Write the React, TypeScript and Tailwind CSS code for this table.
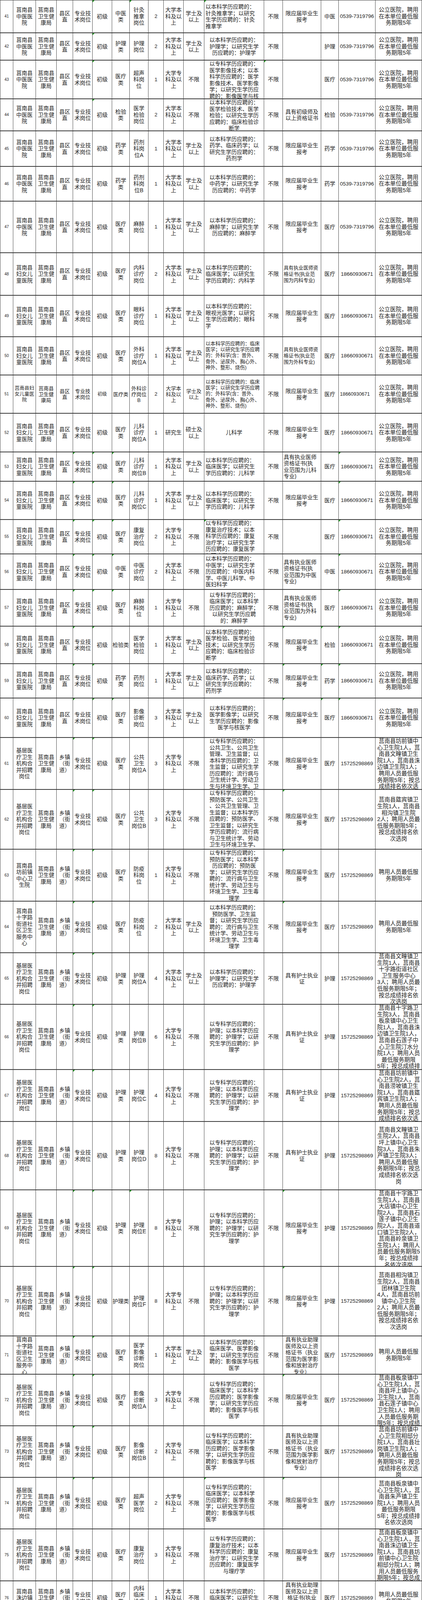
import React from "react";

type Row = {
  n: number;
  h: number;
  u: string;
  c6: string;
  c7: string;
  c8: string;
  c9: string;
  c10: string;
  m: string;
  ml?: boolean;
  ms?: boolean;
  o: string;
  ol?: boolean;
  os?: boolean;
  e: string;
  r: string;
  g: number[];
  sm?: boolean;
};

const ZY = "莒南县\n中医医\n院";
const FY = "莒南县\n妇女儿\n童医院";
const JC = "基层医\n疗卫生\n机构合\n并招聘\n岗位";
const BK = "大学本\n科及以\n上";
const ZK = "大学专\n科及以\n上";
const XS = "学士及\n以上";
const BX = "不限";
const GL = "公立医院，聘用\n在本单位最低服\n务期限5年";
const PY = "聘用人员最低服\n务期限5年";
const YJ = "限应届毕业生\n报考";
const HS = "具有护士执业\n证";
const HL4 = "以专科学历应聘的：\n护理；以本科学历应\n聘的：护理学；以研\n究生学历应聘的：护\n理学";
const LC = "以专科学历应聘的：\n临床医学；以本科学\n历应聘的：临床医\n学；以研究生学历应\n聘的：内科学、外科\n学";
const YX = "以专科学历应聘的：\n临床医学；以本科学\n历应聘的：医学影像\n学；以研究生学历应\n聘的：影像医学与核\n医学";
const WK = "以本科学历应聘的：临床\n医学；以研究生学历应聘\n的：外科学(含：普外、\n骨外、泌尿外、胸心外、\n神外、整形、烧伤)";
const EK = "以本科学历应聘的：\n临床医学；以研究生\n学历应聘的：儿科学";
const ZL = "具有执业助理\n医师及以上资\n格证书（执业\n范围为医学影\n像和放射治疗\n专业）";
const SQ = "莒南县\n十字路\n街道社\n区卫生\n服务中\n心";
const KF = "以专科学历应聘的：\n康复治疗技术；以本\n科学历应聘的：康复\n治疗学；以研究生学\n历应聘的：康复医学\n与理疗学";

const rows: Row[] = [
  { n: 41, h: 84, u: ZY, c6: "中医\n类", c7: "针灸\n推拿\n岗位", c8: "2", c9: BK, c10: XS, m: "以本科学历应聘的：\n针灸推拿学；以研究\n生学历应聘的：针灸\n推拿学", ml: true, o: YJ, e: "中医", r: GL, g: [5, 7, 11] },
  { n: 42, h: 70, u: ZY, c6: "护理\n类", c7: "护理\n岗位", c8: "2", c9: BK, c10: XS, m: "以本科学历应聘的：\n护理学；以研究生学\n历应聘的：护理学", o: "", e: "护理", r: GL, g: [5] },
  { n: 43, h: 99, u: ZY, c6: "医疗\n类", c7: "超声\n科岗\n位", c8: "1", c9: ZK, c10: BX, m: "以专科学历应聘的：\n医学影像技术；以本\n科学历应聘的：医学\n影像技术、医学影像\n学；以研究生学历应\n聘的：影像医学与核\n医学", o: "", e: "医疗", r: GL, g: [5, 12] },
  { n: 44, h: 82, u: ZY, c6: "检验\n类", c7: "医学\n检验\n岗位", c8: "2", c9: BK, c10: BX, m: "以本科学历应聘的：\n医学检验技术、医学\n检验；以研究生学历\n应聘的：临床检验诊\n断学", o: "具有初级师及\n以上资格证书", e: "检验", r: GL, g: [5] },
  { n: 45, h: 91, u: ZY, c6: "药学\n类", c7: "药剂\n科岗\n位A", c8: "1", c9: BK, c10: XS, m: "以本科学历应聘的：\n药学、临床药学；以\n研究生学历应聘的：\n药剂学", o: YJ, e: "药学", r: GL, g: [] },
  { n: 46, h: 89, u: ZY, c6: "药学\n类", c7: "药剂\n科岗\n位B", c8: "1", c9: BK, c10: XS, m: "以本科学历应聘的：\n中药学；以研究生学\n历应聘的：中药学", o: YJ, e: "药学", r: GL, g: [] },
  { n: 47, h: 132, u: ZY, c6: "医疗\n类", c7: "麻醉\n岗位", c8: "1", c9: BK, c10: XS, m: "以本科学历应聘的：\n麻醉学；以研究生学\n历应聘的：麻醉学", o: YJ, e: "医疗", r: GL, g: [] },
  { n: 48, h: 109, u: FY, c6: "医疗\n类", c7: "内科\n诊疗\n岗位", c8: "2", c9: BK, c10: XS, m: "以本科学历应聘的：\n临床医学；以研究生\n学历应聘的：内科学", ml: true, o: "具有执业医师资\n格证书(执业范\n围为内科专业)", ol: true, os: true, e: "医疗", r: GL, g: [] },
  { n: 49, h: 106, u: FY, c6: "医疗\n类", c7: "眼科\n诊疗\n岗位", c8: "1", c9: BK, c10: XS, m: "以本科学历应聘的：\n眼视光医学；以研究\n生学历应聘的：眼科\n学", ml: true, o: YJ, e: "医疗", r: GL, g: [] },
  { n: 50, h: 98, u: FY, c6: "医疗\n类", c7: "外科\n诊疗\n岗位A", c8: "1", c9: BK, c10: XS, m: WK, ml: true, ms: true, o: "具有执业医师资\n格证书(执业范\n围为外科专业)", ol: true, os: true, e: "医疗", r: GL, g: [] },
  { n: 51, h: 98, u: "莒南县妇\n女儿童医\n院", c6: "医疗类", c7: "外科诊\n疗岗位\nB", c8: "2", c9: BK, c10: XS, m: WK, ml: true, ms: true, o: YJ, e: "医疗", r: GL, g: [], sm: true },
  { n: 52, h: 99, u: FY, c6: "医疗\n类", c7: "儿科\n诊疗\n岗位A", c8: "1", c9: "研究生", c10: "硕士及\n以上", m: "儿科学", o: YJ, e: "医疗", r: GL, g: [] },
  { n: 53, h: 75, u: FY, c6: "医疗\n类", c7: "儿科\n诊疗\n岗位B", c8: "1", c9: BK, c10: XS, m: EK, ml: true, o: "具有执业医师\n资格证书(执\n业范围为儿科\n专业)", ol: true, e: "医疗", r: GL, g: [4, 5, 6, 15] },
  { n: 54, h: 98, u: FY, c6: "医疗\n类", c7: "儿科\n诊疗\n岗位C", c8: "1", c9: BK, c10: XS, m: EK, ml: true, o: YJ, e: "医疗", r: GL, g: [4, 5, 6, 15] },
  { n: 55, h: 88, u: FY, c6: "医疗\n类", c7: "康复\n治疗\n岗位", c8: "2", c9: ZK, c10: BX, m: KF, ml: true, o: "", e: "医疗", r: GL, g: [4, 5, 6, 11, 15] },
  { n: 56, h: 91, u: FY, c6: "中医\n类", c7: "中医\n诊疗\n岗位", c8: "2", c9: BK, c10: BX, m: "以本科学历应聘的：\n中医学；以研究生学\n历应聘的：中医内科\n学、中医儿科学、中\n医妇科学", ml: true, o: "具有执业医师\n资格证书(执\n业范围为中医\n专业)", ol: true, e: "中医", r: GL, g: [4, 5, 6, 15] },
  { n: 57, h: 94, u: FY, c6: "医疗\n类", c7: "麻醉\n科岗\n位", c8: "1", c9: ZK, c10: BX, m: "以专科学历应聘的：\n临床医学；以本科学\n历应聘的：麻醉学；\n以研究生学历应聘\n的：麻醉学", o: "具有执业医师\n资格证书(执\n业范围为外科\n专业)", ol: true, e: "医疗", r: GL, g: [4, 5, 6, 15] },
  { n: 58, h: 96, u: FY, c6: "检验类", c7: "医学\n检验\n岗位", c8: "1", c9: BK, c10: XS, m: "以本科学历应聘的：\n医学检验、医学检验\n技术；以研究生学历\n应聘的：临床检验诊\n断学", ml: true, o: YJ, e: "检验", r: GL, g: [4, 5, 13, 14, 15] },
  { n: 59, h: 88, u: FY, c6: "药学\n类", c7: "药剂\n岗位", c8: "1", c9: BK, c10: XS, m: "以本科学历应聘的：\n临床药学、药学；以\n研究生学历应聘的：\n药剂学", ml: true, o: YJ, e: "药学", r: GL, g: [4, 5, 13, 14, 15] },
  { n: 60, h: 101, u: FY, c6: "医疗\n类", c7: "影像\n诊断\n岗位", c8: "3", c9: BK, c10: XS, m: "以本科学历应聘的：\n医学影像学；以研究\n生学历应聘的：影像\n医学与核医学", o: YJ, e: "医疗", r: GL, g: [4, 5, 6, 13, 14, 15] },
  { n: 61, h: 133, u: JC, c6: "医疗\n类", c7: "公共\n卫生\n岗位A", c8: "3", c9: ZK, c10: BX, m: "以专科学历应聘的：\n公共卫生、公共卫生\n管理、卫生监督；以\n本科学历应聘的：卫\n生监督；以研究生学\n历应聘的：流行病与\n卫生统计学、劳动卫\n生与环境卫生学、卫\n生毒理学", o: YJ, e: "医疗", r: "莒南县坊前镇中\n心卫生院1人，莒\n南县文疃镇卫生\n院1人，莒南县洙\n边镇卫生院1人；\n聘用人员最低服\n务期限5年；按总\n成绩排名依次选\n岗", g: [4, 5] },
  { n: 62, h: 153, u: JC, c6: "医疗\n类", c7: "公共\n卫生\n岗位B", c8: "3", c9: ZK, c10: BX, m: "以专科学历应聘的：\n预防医学、公共卫生\n、公共卫生管理、卫\n生监督；以本科学历\n应聘的：预防医学、\n卫生监督；以研究生\n学历应聘的：流行病\n与卫生统计学、劳动\n卫生与环境卫生学、\n卫生毒理学", o: YJ, e: "医疗", r: "莒南县筵宾镇卫\n生院1人，莒南县\n相沟镇卫生院\n2人；聘用人员最\n低服务期限5年；\n按总成绩排名依\n次选岗", g: [4, 5, 13] },
  { n: 63, h: 133, u: "莒南县\n坊前镇\n中心卫\n生院", c6: "医疗\n类", c7: "防疫\n科岗\n位", c8: "1", c9: ZK, c10: BX, m: "以专科学历应聘的：\n预防医学；以本科学\n历应聘的：预防医\n学；以研究生学历应\n聘的：流行病与卫生\n统计学、劳动卫生与\n环境卫生学、卫生毒\n理学", o: YJ, e: "医疗", r: PY, g: [4, 5, 13] },
  { n: 64, h: 132, u: SQ, c6: "医疗\n类", c7: "防疫\n科岗\n位", c8: "2", c9: BK, c10: XS, m: "以本科学历应聘的：\n预防医学、卫生监\n督；以研究生学历应\n聘的：流行病与卫生\n统计学、劳动卫生与\n环境卫生学、卫生毒\n理学", o: YJ, e: "医疗", r: PY, g: [4, 5, 13] },
  { n: 65, h: 132, u: JC, c6: "护理\n类", c7: "护理\n岗位A", c8: "4", c9: BK, c10: XS, m: "以本科学历应聘的：\n护理学；以研究生学\n历应聘的：护理学", o: HS, e: "护理", r: "莒南县文疃镇卫\n生院1人，莒南县\n十字路街道社区\n卫生服务中心\n3人；聘用人员最\n低服务期限5年；\n按总成绩排名依\n次选岗", g: [4, 5] },
  { n: 66, h: 167, u: JC, c6: "护理\n类", c7: "护理\n岗位B", c8: "6", c9: ZK, c10: BX, m: HL4, o: HS, e: "护理", r: "莒南县十字路卫\n生院3人，莒南县\n板泉镇中心卫生\n院1人，莒南县洙\n边镇卫生院1人，\n莒南县石莲子中\n心卫生院汀水分\n院1人；聘用人员\n最低服务期限\n5年；按总成绩排\n名依次选岗", g: [4, 5] },
  { n: 67, h: 133, u: JC, c6: "护理\n类", c7: "护理\n岗位C", c8: "4", c9: ZK, c10: BX, m: HL4, o: HS, e: "护理", r: "莒南县坊前镇中\n心卫生院2人，莒\n南县涝坡镇卫生\n院1人，莒南县筵\n宾镇卫生院1人；\n聘用人员最低服\n务期限5年；按总\n成绩排名依次选\n岗", g: [4, 5] },
  { n: 68, h: 175, u: JC, c6: "护理\n类", c7: "护理\n岗位D", c8: "8", c9: ZK, c10: BX, m: HL4, o: HS, e: "护理", r: "莒南县文疃镇卫\n生院2人，莒南县\n坪上镇中心卫生\n院3人，莒南县朱\n芦镇卫生院3人；\n聘用人员最低服\n务期限5年；按总\n成绩排名依次选\n岗", g: [] },
  { n: 69, h: 196, u: JC, c6: "护理\n类", c7: "护理\n岗位E", c8: "8", c9: ZK, c10: BX, m: HL4, o: YJ, e: "护理", r: "莒南县十字路卫\n生院1人，莒南县\n大店镇中心卫生\n院2人，莒南县石\n莲子镇中心卫生\n院2人，莒南县道\n口镇卫生院2人，\n莒南县岭泉镇卫\n生院1人；聘用人\n员最低服务期限5\n年；按总成绩排\n名依次选岗", g: [4, 5, 7, 13] },
  { n: 70, h: 178, u: JC, c6: "护理类", c7: "护理\n岗位F", c8: "8", c9: ZK, c10: BX, m: HL4, o: YJ, e: "护理", r: "莒南县相沟镇卫\n生院2人，莒南县\n团林镇卫生院\n4人，莒南县坊前\n镇中心卫生院\n2人；聘用人员最\n低服务期限5年；\n按总成绩排名依\n次选岗", g: [4, 5, 13] },
  { n: 71, h: 98, u: SQ, c6: "医疗\n类", c7: "医学\n影像\n诊断\n岗位", c8: "1", c9: BK, c10: XS, m: "以本科学历应聘的：\n临床医学、医学影像\n学；以研究生学历应\n聘的：影像医学与核\n医学", o: ZL, e: "医疗", r: PY, g: [4, 5] },
  { n: 72, h: 132, u: JC, c6: "医疗\n类", c7: "影像\n诊断\n岗位A", c8: "3", c9: ZK, c10: BX, m: YX, o: YJ, e: "医疗", r: "莒南县板泉镇中\n心卫生院1人，莒\n南县坪上镇中心\n卫生院1人，莒南\n县石莲子镇中心\n卫生院1人；聘用\n人员最低服务期\n限5年；按总成绩\n排名依次选岗", g: [4, 5, 13] },
  { n: 73, h: 132, u: JC, c6: "医疗\n类", c7: "影像\n诊断\n岗位B", c8: "2", c9: ZK, c10: BX, m: YX, ml: true, o: ZL, e: "医疗", r: "莒南县坊前镇中\n心卫生院相邸分\n院1人，莒南县壮\n岗镇卫生院1人；\n聘用人员最低服\n务期限5年；按总\n成绩排名依次选\n岗", g: [4, 5] },
  { n: 74, h: 132, u: JC, c6: "医疗\n类", c7: "超声\n医学\n岗位", c8: "2", c9: ZK, c10: BX, m: YX, ml: true, o: YJ, e: "医疗", r: "莒南县板泉镇中\n心卫生院1人，莒\n南县朱芦镇卫生\n院1人；聘用人员\n最低服务期限\n5年；按总成绩排\n名依次选岗", g: [4, 5, 11, 13] },
  { n: 75, h: 133, u: JC, c6: "医疗\n类", c7: "康复\n治疗\n岗位", c8: "3", c9: ZK, c10: BX, m: KF, o: YJ, e: "医疗", r: "莒南县板泉镇中\n心卫生院1人，莒\n南县洙边镇卫生\n院1人，莒南县坊\n前镇中心卫生院\n相邸分院1人；聘\n用人员最低服务\n期限5年；按总成\n绩排名依次选岗", g: [] },
  { n: 76, h: 87, u: "莒南县\n洙边镇\n卫生院", c6: "医疗\n类", c7: "内科\n临床\n诊疗\n岗位", c8: "1", c9: BK, c10: BX, m: "以本科学历应聘的：\n临床医学；以研究生\n学历应聘的：内科学", o: "具有执业助理\n医师及以上资\n格证书(执业\n范围为内科专\n业)", e: "医疗", r: PY, g: [] },
  { n: 77, h: 98, u: "莒南县\n团林镇\n卫生院", c6: "医疗\n类", c7: "临床\n诊疗\n岗位", c8: "4", c9: ZK, c10: BX, m: LC, o: YJ, e: "医疗", r: PY, g: [] },
  { n: 78, h: 99, u: "莒南县\n石莲子\n镇中心\n卫生院", c6: "医疗\n类", c7: "临床\n诊疗\n岗位", c8: "2", c9: ZK, c10: BX, m: LC, o: "具有执业助理\n医师及以上资\n格证书", e: "医疗", r: PY, g: [4, 5] },
  { n: 79, h: 147, u: JC, c6: "医疗\n类", c7: "临床\n诊疗\n岗位A", c8: "7", c9: ZK, c10: BX, m: LC, o: YJ, e: "医疗", r: "莒南县石莲子镇\n中心卫生院汀水\n分院1人，莒南县\n道口镇卫生院\n3人，莒南县岭泉\n镇卫生院3人；聘\n用人员最低服务\n期限5年；按总成\n绩排名依次选岗", g: [4, 5, 13] },
  { n: 80, h: 132, u: JC, c6: "医疗\n类", c7: "临床\n诊疗\n岗位B", c8: "7", c9: ZK, c10: BX, m: LC, o: "具有执业助理\n医师及以上资\n格证书", e: "医疗", r: "莒南县坪上镇中\n心卫生院4人，莒\n南县朱芦镇卫生\n院3人；聘用人员\n最低服务期限\n5年；按总成绩排\n名依次选岗", g: [4, 5] },
];

const WIDTHS = [
  "w-[34px]", "w-[58px]", "w-[53px]", "w-[42px]", "w-[50px]", "w-[50px]", "w-[45px]", "w-[48px]", "w-[39px]",
  "w-[51px]", "w-[53px]", "w-[153px]", "w-[48px]", "w-[98px]", "w-[45px]", "w-[94px]", "w-[119px]",
];

const CJK = "text-[14px] leading-[16.5px]";
const SMALL = "text-[13px] leading-[15px]";

function Cell({ text, cls, mark, w, first }: { text: string; cls: string; mark: boolean; w: string; first?: boolean }) {
  return (
    <div className={"relative flex h-full shrink-0 flex-col overflow-hidden border-r border-[#4a4a4a] " + w + (first ? " border-l" : "")}>
      {mark && (
        <span className="absolute left-0 top-0 h-0 w-0 border-t-[5px] border-r-[5px] border-t-[#1e9a1e] border-r-transparent" />
      )}
      <div className={"my-auto w-full shrink-0 whitespace-pre " + cls}>{text}</div>
    </div>
  );
}

function TableRow({ row }: { row: Row }) {
  const county = row.n <= 60;
  const phone = row.n <= 47 ? "0539-7319796" : row.n <= 60 ? "18660930671" : "15725298869";
  const base = row.sm ? SMALL : CJK;
  const cells: { t: string; c: string }[] = [
    { t: String(row.n), c: "text-center text-[10px] leading-[12px]" },
    { t: row.u, c: "text-center " + (row.sm ? "text-[12.5px] leading-[15px]" : CJK) },
    { t: "莒南县\n卫生健\n康局", c: "text-center " + base },
    { t: county ? "县区\n直" : "乡镇\n（街\n道）", c: "text-center " + base },
    { t: "专业技\n术岗位", c: "text-center " + base },
    { t: "初级", c: "text-center " + (row.sm ? "text-[12px] leading-[15px]" : CJK) },
    { t: row.c6, c: "text-center " + base },
    { t: row.c7, c: "text-center " + base },
    { t: row.c8, c: "text-center text-[13px] leading-[16px]" },
    { t: row.c9, c: "text-center " + base },
    { t: row.c10, c: "text-center " + base },
    {
      t: row.m,
      c:
        (row.ml ? "text-left pl-[3px] " : "text-center ") +
        (row.ms ? "text-[12.6px] leading-[15.3px]" : CJK),
    },
    { t: "不限", c: "text-center " + CJK },
    {
      t: row.o,
      c:
        (row.ol ? "text-left pl-[2px] " : "text-center ") +
        (row.os ? "text-[12.6px] leading-[16px]" : CJK),
    },
    { t: row.e, c: "text-center " + CJK },
    {
      t: phone,
      c: row.sm ? "text-left pl-[3px] text-[12.5px] leading-[16px]" : "text-center text-[13.5px] leading-[16px]",
    },
    { t: row.r, c: "text-center text-[14.5px] leading-[16.6px]" },
  ];
  return (
    <div className="flex overflow-hidden border-b-2 border-[#3a3a3a]" style={{ height: row.h }}>
      {cells.map((c, i) => (
        <Cell key={i} text={c.t} cls={c.c} mark={row.g.includes(i)} w={WIDTHS[i]} first={i === 0} />
      ))}
    </div>
  );
}

export default function App() {
  return (
    <div className="h-[4611px] w-[1080px] overflow-hidden bg-white text-[#1c1c1c] font-['Liberation_Sans','Noto_Sans_CJK_SC',sans-serif]">
      <div className="border-t border-[#3a3a3a]">
        {rows.map((r) => (
          <TableRow key={r.n} row={r} />
        ))}
      </div>
    </div>
  );
}
